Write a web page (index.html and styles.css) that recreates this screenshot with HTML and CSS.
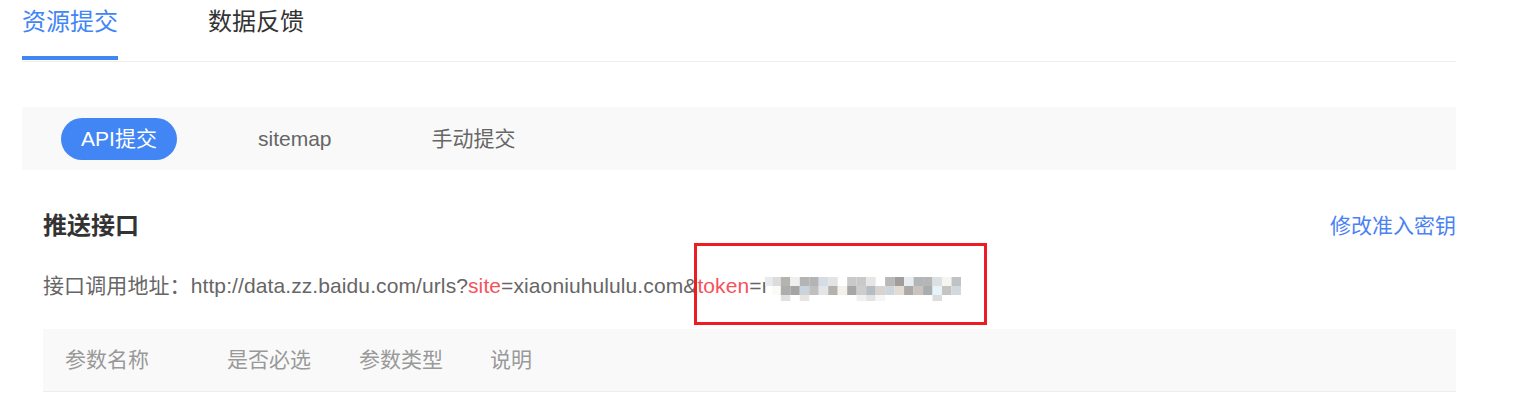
FILE: index.html
```html
<!DOCTYPE html>
<html lang="zh-CN">
<head>
<meta charset="utf-8">
<title>资源提交</title>
<link rel="stylesheet" href="styles.css">
</head>
<body>
<div class="page">
  <nav class="tabs">
    <a class="tab tab-active">资源提交</a>
    <a class="tab">数据反馈</a>
  </nav>

  <div class="subnav">
    <span class="sub sub-active">API提交</span>
    <span class="sub">sitemap</span>
    <span class="sub">手动提交</span>
  </div>

  <div class="section-head">
    <h2 class="section-title">推送接口</h2>
    <a class="section-link">修改准入密钥</a>
  </div>

  <p class="url-line">接口调用地址：http://data.zz.baidu.com/urls?<span class="param">site</span>=xiaoniuhululu.com&amp;<span class="param">token</span>=<span class="redacted">r</span></p>

  <div class="table-head">
    <span class="th">参数名称</span>
    <span class="th">是否必选</span>
    <span class="th">参数类型</span>
    <span class="th">说明</span>
  </div>

  <svg class="mosaic" width="196" height="27" viewBox="0 0 186 27" preserveAspectRatio="none" aria-hidden="true">
    <rect x="0" y="0" width="7" height="9" fill="#e6ebf0"/>
    <rect x="7" y="0" width="8" height="9" fill="#dcdcdc"/>
    <rect x="15" y="0" width="9" height="9" fill="#b5b3b0"/>
    <rect x="24" y="0" width="9" height="9" fill="#efefef"/>
    <rect x="33" y="0" width="9" height="9" fill="#b4b4b4"/>
    <rect x="42" y="0" width="9" height="9" fill="#b4b4b4"/>
    <rect x="51" y="0" width="9" height="9" fill="#d3dde6"/>
    <rect x="60" y="0" width="9" height="9" fill="#e3e3e3"/>
    <rect x="78" y="0" width="9" height="9" fill="#c9c9c9"/>
    <rect x="87" y="0" width="9" height="9" fill="#c9c9c9"/>
    <rect x="96" y="0" width="9" height="9" fill="#e6e6e6"/>
    <rect x="114" y="0" width="9" height="9" fill="#b8b8b8"/>
    <rect x="123" y="0" width="9" height="9" fill="#a09d9a"/>
    <rect x="132" y="0" width="9" height="9" fill="#e9edf1"/>
    <rect x="141" y="0" width="9" height="9" fill="#b3b6b8"/>
    <rect x="150" y="0" width="9" height="9" fill="#b6b6b6"/>
    <rect x="159" y="0" width="9" height="9" fill="#dde0e3"/>
    <rect x="168" y="0" width="9" height="9" fill="#f7f5ef"/>
    <rect x="177" y="0" width="9" height="9" fill="#c0c3c6"/>

    <rect x="7" y="9" width="8" height="9" fill="#fcfaf6"/>
    <rect x="15" y="9" width="9" height="9" fill="#adadad"/>
    <rect x="24" y="9" width="9" height="9" fill="#a3a5a3"/>
    <rect x="33" y="9" width="9" height="9" fill="#c8d3dc"/>
    <rect x="42" y="9" width="9" height="9" fill="#bfbfbf"/>
    <rect x="51" y="9" width="9" height="9" fill="#e5e5e5"/>
    <rect x="60" y="9" width="9" height="9" fill="#b5b2ae"/>
    <rect x="69" y="9" width="9" height="9" fill="#f3f1ec"/>
    <rect x="78" y="9" width="9" height="9" fill="#a8a6a4"/>
    <rect x="87" y="9" width="9" height="9" fill="#cdcdcd"/>
    <rect x="96" y="9" width="9" height="9" fill="#b5bcc4"/>
    <rect x="105" y="9" width="9" height="9" fill="#d6d3d0"/>
    <rect x="114" y="9" width="9" height="9" fill="#cfd5dc"/>
    <rect x="123" y="9" width="9" height="9" fill="#e3dcd2"/>
    <rect x="132" y="9" width="9" height="9" fill="#aba8a5"/>
    <rect x="141" y="9" width="9" height="9" fill="#c8c3be"/>
    <rect x="150" y="9" width="9" height="9" fill="#a8adb0"/>
    <rect x="159" y="9" width="9" height="9" fill="#e8f2fa"/>
    <rect x="168" y="9" width="9" height="9" fill="#c4c4c4"/>
    <rect x="177" y="9" width="9" height="9" fill="#d3d8de"/>

    <rect x="15" y="18" width="9" height="6" fill="#e0e0e0"/>
    <rect x="33" y="18" width="9" height="6" fill="#e8e4e0"/>
    <rect x="87" y="18" width="9" height="6" fill="#f0f0f0"/>
    <rect x="96" y="18" width="9" height="6" fill="#e3e3e3"/>
    <rect x="105" y="18" width="9" height="6" fill="#f6f6f6"/>
    <rect x="159" y="18" width="9" height="6" fill="#dcdcdc"/>
  </svg>

  <div class="highlight-box"></div>
</div>
</body>
</html>
```

FILE: styles.css
```css
* {
  box-sizing: border-box;
}

html, body {
  margin: 0;
  padding: 0;
  background: #ffffff;
}

body {
  font-family: "Liberation Sans", "Noto Sans CJK SC", sans-serif;
  color: #333333;
}

.page {
  position: relative;
  margin-left: 22px;
  width: 1434px;
}

/* top tabs */
.tabs {
  display: flex;
  gap: 90px;
  padding-bottom: 1px;
  border-bottom: 1px solid #eeeeee;
}

.tab {
  display: block;
  font-size: 24px;
  line-height: 32px;
  padding-top: 6px;
  padding-bottom: 18px;
  border-bottom: 4px solid transparent;
  color: #333333;
  cursor: pointer;
}

.tab-active {
  color: #4285f4;
  border-bottom-color: #4285f4;
}

/* sub navigation */
.subnav {
  margin-top: 45px;
  height: 63px;
  background: #f9f9f9;
  display: flex;
  align-items: center;
  padding-left: 39px;
  gap: 62px;
}

.sub {
  display: block;
  height: 42px;
  line-height: 42px;
  font-size: 21px;
  padding: 0 19px;
  border-radius: 21px;
  color: #666666;
  white-space: nowrap;
}

.sub-active {
  background: #4285f4;
  color: #ffffff;
  width: 116px;
  text-align: center;
  padding: 0;
}

/* section header */
.section-head {
  margin-top: 40px;
  padding-left: 21px;
  display: flex;
  align-items: center;
  justify-content: space-between;
  height: 32px;
}

.section-title {
  margin: 0;
  font-size: 24px;
  line-height: 32px;
  font-weight: bold;
  color: #333333;
}

.section-link {
  font-size: 21px;
  line-height: 32px;
  color: #4a82f4;
  cursor: pointer;
}

/* url line */
.url-line {
  margin: 28px 0 0 0;
  padding-left: 21px;
  font-size: 21px;
  line-height: 32px;
  color: #666666;
  letter-spacing: 0.1px;
  white-space: nowrap;
}

.param {
  color: #f5535b;
}

.redacted {
  color: #666666;
}

/* table head */
.table-head {
  margin-top: 27px;
  margin-left: 21px;
  height: 63px;
  background: #f9f9f9;
  border-bottom: 1px solid #eeeeee;
  display: grid;
  grid-template-columns: 162px 132px 131px 1fr;
  padding-left: 22px;
}

.th {
  font-size: 21px;
  line-height: 62px;
  color: #999999;
}

/* overlays: redaction mosaic and annotation box */
.mosaic {
  position: absolute;
  left: 743px;
  top: 277px;
  display: block;
}

.highlight-box {
  position: absolute;
  left: 672px;
  top: 243px;
  width: 293px;
  height: 82px;
  border: 3px solid #ed1c24;
}
```
